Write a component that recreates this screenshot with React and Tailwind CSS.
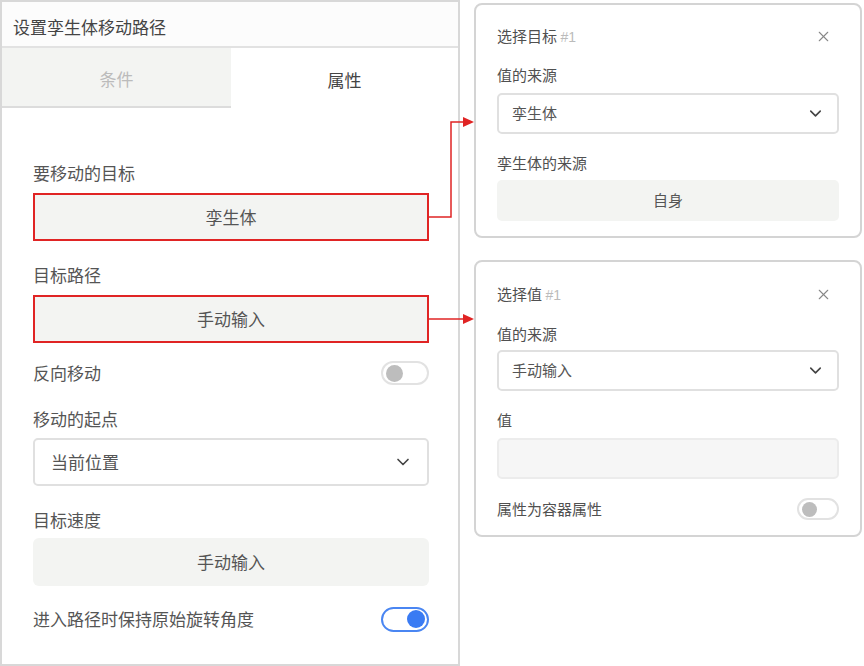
import { ChevronDown, X } from 'lucide-react';

const font = { fontFamily: '"Noto Sans CJK SC", "Noto Sans", sans-serif' };

function Toggle({ on, small }) {
  if (on) {
    return (
      <div className="w-[48px] h-[25px] rounded-full border-2 border-[#4a86f2] bg-white flex items-center justify-end pr-[2px]">
        <div className="w-[18px] h-[18px] rounded-full bg-[#3a7bf3]" />
      </div>
    );
  }
  return (
    <div
      className={`${small ? 'w-[42px] h-[22px]' : 'w-[48px] h-[24px]'} rounded-full border-2 border-[#e2e2e2] bg-white flex items-center pl-[3px]`}
    >
      <div className={`${small ? 'w-[15px] h-[15px]' : 'w-[17px] h-[17px]'} rounded-full bg-[#bdbdbd]`} />
    </div>
  );
}

function Label({ children, className = '' }) {
  return <div className={`h-[24px] leading-[24px] text-[17px] text-[#555] ${className}`}>{children}</div>;
}

function SmallLabel({ children, className = '' }) {
  return <div className={`h-[22px] leading-[22px] text-[15px] text-[#505050] ${className}`}>{children}</div>;
}

function Select({ value, small }) {
  return (
    <div
      className={`${small ? 'h-[41px] pl-[13px] pr-[12px] text-[15px]' : 'h-[48px] pl-[16px] pr-[14px] text-[17px]'} rounded-[5px] border-2 border-[#e0e0e0] bg-white flex items-center justify-between text-[#555]`}
    >
      <span>{value}</span>
      <ChevronDown size={small ? 19 : 20} strokeWidth={2} className="text-[#444]" />
    </div>
  );
}

function Panel({ title, children, className = '' }) {
  return (
    <div className={`w-[388px] rounded-[8px] border-2 border-[#d4d4d4] bg-white px-[21px] ${className}`}>
      <div className="flex items-center justify-between h-[22px]">
        <div className="text-[15px] text-[#505050]">
          {title} <span className="text-[#bbb] text-[14px]" style={{ fontFamily: '"Liberation Sans", sans-serif' }}>#1</span>
        </div>
        <X size={17} strokeWidth={1.5} className="text-[#888] mr-[7px]" />
      </div>
      {children}
    </div>
  );
}

export default function App() {
  return (
    <div className="relative w-[864px] h-[666px] bg-white flex" style={font}>
      {/* left panel */}
      <div className="w-[460px] h-[666px] border-2 border-[#d8d8d8] bg-white flex flex-col">
        <div className="h-[46px] bg-[#fcfcfc] border-b-2 border-[#e2e2e2] flex items-center pl-[11px] pt-[6px] text-[17px] text-[#444]">
          设置孪生体移动路径
        </div>
        <div className="flex h-[60px]">
          <div className="w-[229px] bg-[#f3f4f2] border-b-2 border-[#dcdcdc] flex items-center justify-center pt-[3px] text-[17px] text-[#bbb]">
            条件
          </div>
          <div className="flex-1 flex items-center justify-center pt-[3px] text-[17px] text-[#444]">属性</div>
        </div>
        <div className="pl-[31px] pr-[29px] pt-[53px] flex flex-col">
          <Label>要移动的目标</Label>
          <div className="mt-[8px] h-[48px] border-2 border-[#e02424] bg-[#f3f4f2] flex items-center justify-center text-[17px] text-[#555]">
            孪生体
          </div>
          <Label className="mt-[22px]">目标路径</Label>
          <div className="mt-[8px] h-[48px] border-2 border-[#e02424] bg-[#f3f4f2] flex items-center justify-center text-[17px] text-[#555]">
            手动输入
          </div>
          <div className="mt-[18px] h-[24px] flex items-center justify-between">
            <Label>反向移动</Label>
            <Toggle />
          </div>
          <Label className="mt-[22px]">移动的起点</Label>
          <div className="mt-[7px]">
            <Select value="当前位置" />
          </div>
          <Label className="mt-[22px]">目标速度</Label>
          <div className="mt-[6px] h-[48px] rounded-[6px] bg-[#f3f4f2] flex items-center justify-center text-[17px] text-[#555]">
            手动输入
          </div>
          <div className="mt-[21px] h-[24px] flex items-center justify-between">
            <Label>进入路径时保持原始旋转角度</Label>
            <Toggle on />
          </div>
        </div>
      </div>

      {/* right panels */}
      <div className="ml-[14px] pt-[3px] flex flex-col gap-[22px]">
        <Panel title="选择目标" className="h-[235px] pt-[20px]">
          <SmallLabel className="mt-[17px]">值的来源</SmallLabel>
          <div className="mt-[7px]">
            <Select value="孪生体" small />
          </div>
          <SmallLabel className="mt-[18px]">孪生体的来源</SmallLabel>
          <div className="mt-[6px] h-[41px] rounded-[5px] bg-[#f3f4f2] flex items-center justify-center text-[15px] text-[#555]">
            自身
          </div>
        </Panel>
        <Panel title="选择值" className="h-[277px] pt-[21px]">
          <SmallLabel className="mt-[18px]">值的来源</SmallLabel>
          <div className="mt-[5px]">
            <Select value="手动输入" small />
          </div>
          <SmallLabel className="mt-[18px]">值</SmallLabel>
          <div className="mt-[7px] h-[41px] rounded-[5px] border-2 border-[#ececec] bg-[#f6f6f6]" />
          <div className="mt-[19px] h-[22px] flex items-center justify-between">
            <SmallLabel>属性为容器属性</SmallLabel>
            <Toggle small />
          </div>
        </Panel>
      </div>

      {/* connector arrows */}
      <svg className="absolute inset-0 pointer-events-none" width="864" height="666" viewBox="0 0 864 666">
        <polyline points="429,217 451,217 451,122 464,122" fill="none" stroke="#e02424" strokeWidth="1.5" />
        <polygon points="463,117 474,122 463,127" fill="#e02424" />
        <line x1="429" y1="319" x2="464" y2="319" stroke="#e02424" strokeWidth="1.5" />
        <polygon points="463,314 474,319 463,324" fill="#e02424" />
      </svg>
    </div>
  );
}
